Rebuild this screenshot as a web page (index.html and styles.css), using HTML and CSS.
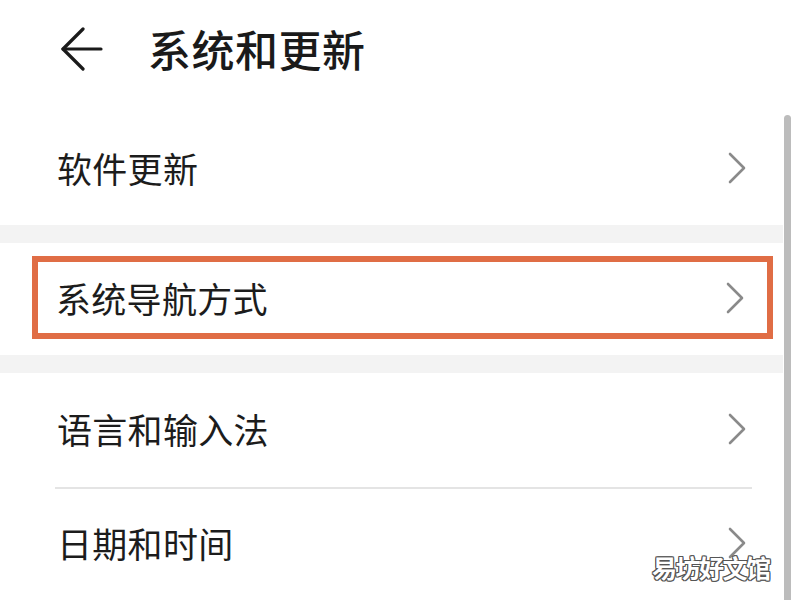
FILE: index.html
```html
<!DOCTYPE html>
<html lang="zh">
<head>
<meta charset="utf-8">
<link rel="stylesheet" href="styles.css">
</head>
<body>
<div class="screen">
  <div class="content">
    <header class="header">
      <svg class="back" width="42" height="44" viewBox="0 0 42 44" fill="none" stroke="#1a1a1a" stroke-width="3.2" stroke-linecap="round" stroke-linejoin="round">
        <path d="M22 2 L2 22 L22 42"/>
        <path d="M2 22 H40"/>
      </svg>
      <h1 class="title">系统和更新</h1>
    </header>
    <div class="row row1">
      <span class="label">软件更新</span>
      <svg class="chev" width="18" height="32" viewBox="0 0 18 32" fill="none" stroke="#8a8a8a" stroke-width="2.6" stroke-linecap="round" stroke-linejoin="round"><path d="M2 2 L16 16 L2 30"/></svg>
    </div>
    <div class="band"></div>
    <div class="row row2">
      <div class="highlight">
        <span class="label">系统导航方式</span>
        <svg class="chev" width="18" height="32" viewBox="0 0 18 32" fill="none" stroke="#8a8a8a" stroke-width="2.6" stroke-linecap="round" stroke-linejoin="round"><path d="M2 2 L16 16 L2 30"/></svg>
      </div>
    </div>
    <div class="band"></div>
    <div class="row row3">
      <span class="label">语言和输入法</span>
      <svg class="chev" width="18" height="32" viewBox="0 0 18 32" fill="none" stroke="#8a8a8a" stroke-width="2.6" stroke-linecap="round" stroke-linejoin="round"><path d="M2 2 L16 16 L2 30"/></svg>
    </div>
    <div class="divider"></div>
    <div class="row row4">
      <span class="label">日期和时间</span>
      <svg class="chev" width="18" height="32" viewBox="0 0 18 32" fill="none" stroke="#8a8a8a" stroke-width="2.6" stroke-linecap="round" stroke-linejoin="round"><path d="M2 2 L16 16 L2 30"/></svg>
    </div>
  </div>
  <div class="track"><div class="thumb"></div></div>
  <div class="watermark">易坊好文馆</div>
</div>
</body>
</html>
```

FILE: styles.css
```css
* { box-sizing: border-box; }
html, body { margin: 0; padding: 0; background: #ffffff; }
body {
  font-family: "Noto Sans CJK SC", "Noto Sans", sans-serif;
  color: #1a1a1a;
}
.screen {
  position: relative;
  width: 800px;
  height: 600px;
  overflow: hidden;
  display: flex;
  background: #ffffff;
}
.content {
  width: 783px;
  flex: none;
  display: flex;
  flex-direction: column;
}
.header {
  height: 114px;
  flex: none;
  display: flex;
  align-items: flex-start;
  padding: 27px 0 0 61px;
}
.back { flex: none; }
.title {
  margin: -7px 0 0 45px;
  font-size: 43px;
  line-height: 56px;
  font-weight: 500;
  letter-spacing: 0.5px;
  color: #1a1a1a;
}
.row {
  flex: none;
  display: flex;
  align-items: center;
  padding: 0 37px 0 57px;
}
.label {
  font-size: 35px;
  line-height: 44px;
  font-weight: 400;
  letter-spacing: 0.3px;
  color: #1c1c1c;
}
.chev { margin-left: auto; flex: none; }
.row1 { height: 111px; padding-top: 0; padding-bottom: 4px; }
.row2 {
  height: 112px;
  padding: 13px 10px 16px 32px;
  align-items: stretch;
}
.highlight {
  flex: 1;
  display: flex;
  align-items: center;
  border: 6px solid #e06d45;
  padding: 0 23px 0 18px;
}
.row3 { height: 114px; padding-bottom: 2px; }
.row4 { height: 112px; padding-bottom: 4px; }
.band {
  height: 18px;
  flex: none;
  background: #f3f3f3;
}
.divider {
  height: 2px;
  flex: none;
  margin: 0 31px 0 55px;
  background: #e4e4e4;
}
.track {
  flex: none;
  width: 17px;
  padding: 115px 0 0 1px;
}
.thumb {
  width: 7px;
  height: 500px;
  background: #bcbcbc;
  border-radius: 4px 4px 0 0;
}
.watermark {
  position: absolute;
  left: 652px;
  top: 549px;
  font-size: 25px;
  line-height: 36px;
  letter-spacing: -1.5px;
  color: #ffffff;
  font-weight: 700;
  text-shadow:
    1px 0 0 #555, -1px 0 0 #555, 0 1px 0 #555, 0 -1px 0 #555,
    1px 1px 0 #555, -1px -1px 0 #555, 1px -1px 0 #555, -1px 1px 0 #555;
}
```
